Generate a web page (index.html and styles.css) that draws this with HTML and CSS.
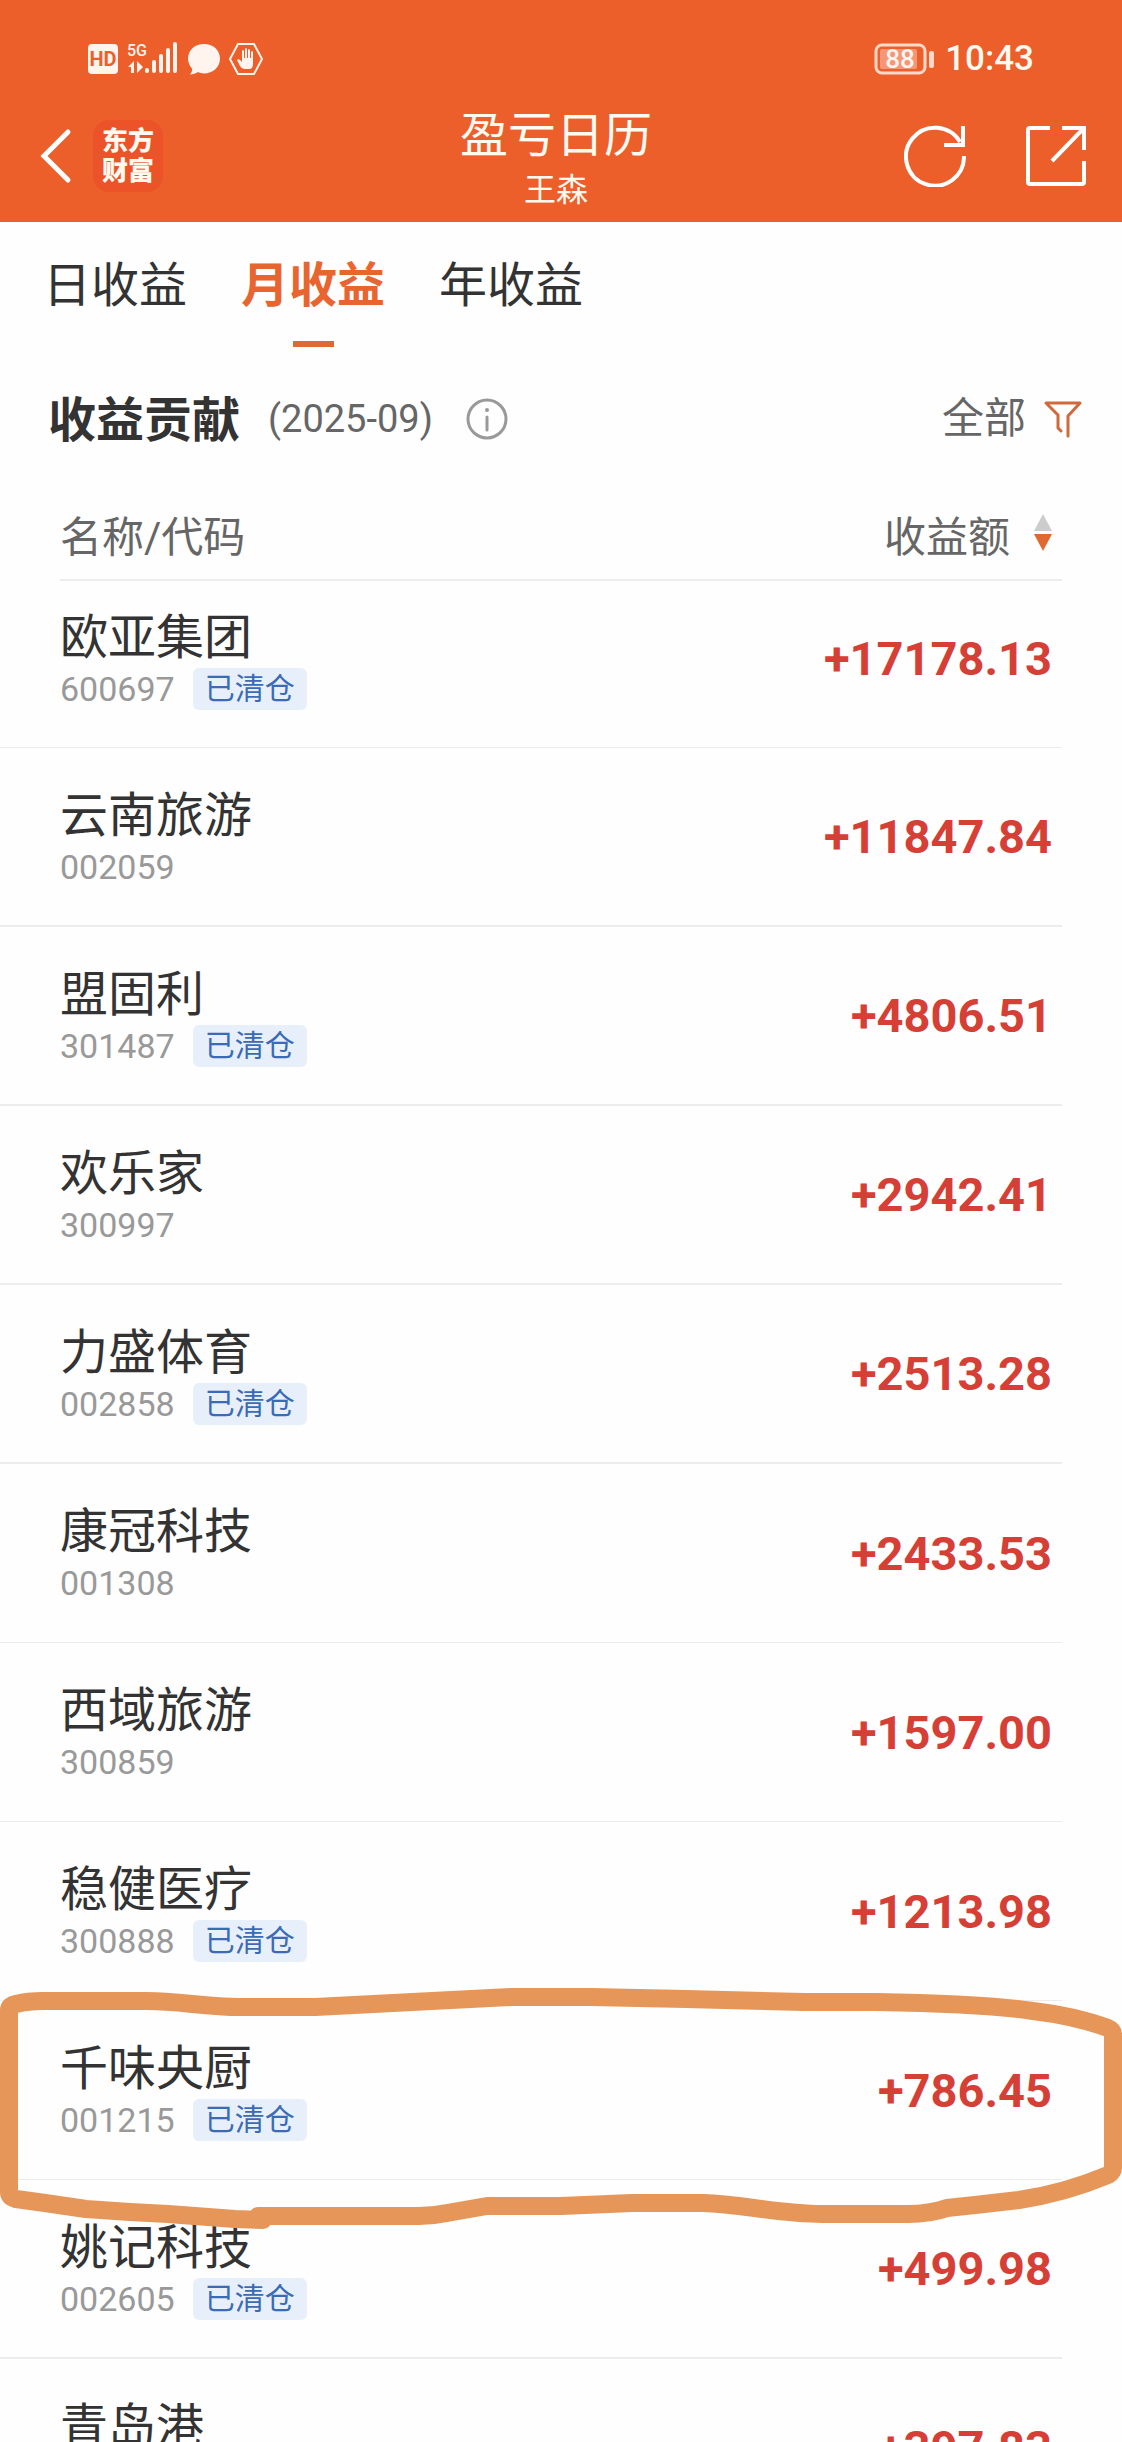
FILE: index.html
```html
<!DOCTYPE html>
<html lang="zh-CN">

<head>
  <meta charset="UTF-8">
  <meta name="viewport" content="width=device-width, initial-scale=1.0">
  <title>盈亏日历</title>
  <link rel="stylesheet" href="styles.css">
</head>

<body>
  <div class="app">
    <header class="top">
      <div class="status">
        <svg class="status-icons" width="176" height="34" viewBox="88 42 176 34" aria-hidden="true">
          <rect x="88" y="44" width="30" height="30" rx="4" fill="#fff4ee" />
          <text class="hd" x="103" y="66" text-anchor="middle">HD</text>
          <text class="net" x="127" y="56">5G</text>
          <path d="M128 67l6-6v12h-3v-6zM137 61v12l6-6z" fill="#fff4ee" />
          <path d="M147 70v1M154 62v9M161 56v15M168 50v21M175 44v27" stroke="#fff4ee" stroke-width="4" stroke-linecap="round" />
          <path d="M204 44c9 0 16 6 16 14.500s-7 15-16 15c-2 0-5-1-6-1.500-2 1.500-5 2.500-8 2.500 1.500-2 2.500-4 2-6-2-2-4-6-4-10C188 50 195 44 204 44z" fill="#fff4ee" />
          <path d="M238 44h16l8 15-8 15h-16l-8-15z" fill="none" stroke="#fff4ee" stroke-width="2" />
          <path d="M237 60q2-2 4 1l1 1V51q1-2 2 0v7h1v-9q1-2 2 0v9h1v-8q1-2 2 0v8h1v-6q1-2 2 0v12q0 5-4 5h-5q-2 0-4-3z" fill="#fff4ee" />
        </svg>
        <div class="status-right">
          <svg width="60" height="32" viewBox="874 42 60 32" aria-hidden="true">
            <rect x="876" y="44" width="49" height="28" rx="6" fill="none" stroke="#fdd9c9" stroke-width="3" />
            <rect x="880" y="48" width="37" height="20" rx="2" fill="#f59776" />
            <rect x="929" y="50" width="5" height="17" rx="2" fill="#fdd9c9" />
            <text class="battery" x="900" y="67" text-anchor="middle">88</text>
          </svg>
          <time class="clock">10:43</time>
        </div>
      </div>
      <div class="nav">
        <div class="nav-left">
          <button class="icon-btn" type="button" aria-label="返回">
            <svg width="32" height="56" viewBox="0 0 32 56"><path d="M28 4L4 28l24 24" fill="none" stroke="#fff" stroke-width="5" stroke-linecap="round" /></svg>
          </button>
          <div class="logo">东方<br>财富</div>
        </div>
        <div class="title">
          <h1>盈亏日历</h1>
          <p>王森</p>
        </div>
        <div class="nav-right">
          <button class="icon-btn" type="button" aria-label="刷新">
            <svg width="62" height="62" viewBox="0 0 62 62" fill="none" stroke="#fff" stroke-width="4"><path d="M60 31A29 29 0 1 1 56 17" /><path d="M59 1v19H40" /></svg>
          </button>
          <button class="icon-btn" type="button" aria-label="分享">
            <svg width="60" height="60" viewBox="0 0 60 60" fill="none" stroke="#fff" stroke-width="4"><path d="M24 2H4q-2 0-2 2v52q0 2 2 2h52q2 0 2-2V35M36 2h22v22" /><path d="M57 3L26 35" /></svg>
          </button>
        </div>
      </div>
    </header>

    <nav class="tabs">
      <a class="tab" href="#day">日收益</a>
      <a class="tab active" href="#month">月收益</a>
      <a class="tab" href="#year">年收益</a>
    </nav>

    <div class="section-head">
      <h2>收益贡献</h2>
      <span class="period">(2025-09)</span>
      <button class="icon-btn" type="button" aria-label="说明">
        <svg width="42" height="42" viewBox="0 0 42 42"><circle cx="21" cy="21" r="19" fill="none" stroke="#999" stroke-width="3" /><circle cx="21" cy="12" r="2" fill="#999" /><path d="M21 19v13" stroke="#999" stroke-width="3" stroke-linecap="round" /></svg>
      </button>
      <button class="filter" type="button">
        全部
        <svg width="38" height="38" viewBox="0 0 38 38"><path d="M24 36V16L36 3H2l12 12v13l3 3" fill="none" stroke="#d0693b" stroke-width="3" stroke-linecap="round" stroke-linejoin="round" /></svg>
      </button>
    </div>

    <div class="list">
      <table>
        <thead>
          <tr>
            <th class="left">名称/代码</th>
            <th class="right">
              <button class="sort" type="button">
                收益额
                <svg width="18" height="38" viewBox="0 0 18 38"><path d="M9 0l9 17H0z" fill="#ccc" /><path d="M0 20h18L9 37z" fill="#e0692f" /></svg>
              </button>
            </th>
          </tr>
        </thead>
        <tbody>
          <tr class="first thin">
            <td><div class="name">欧亚集团</div><div class="code">600697<span class="badge">已清仓</span></div></td>
            <td class="amount">+17178.13</td>
          </tr>
          <tr>
            <td><div class="name">云南旅游</div><div class="code">002059</div></td>
            <td class="amount">+11847.84</td>
          </tr>
          <tr>
            <td><div class="name">盟固利</div><div class="code">301487<span class="badge">已清仓</span></div></td>
            <td class="amount">+4806.51</td>
          </tr>
          <tr>
            <td><div class="name">欢乐家</div><div class="code">300997</div></td>
            <td class="amount">+2942.41</td>
          </tr>
          <tr>
            <td><div class="name">力盛体育</div><div class="code">002858<span class="badge">已清仓</span></div></td>
            <td class="amount">+2513.28</td>
          </tr>
          <tr class="thin">
            <td><div class="name">康冠科技</div><div class="code">001308</div></td>
            <td class="amount">+2433.53</td>
          </tr>
          <tr class="thin">
            <td><div class="name">西域旅游</div><div class="code">300859</div></td>
            <td class="amount">+1597.00</td>
          </tr>
          <tr class="thin">
            <td><div class="name">稳健医疗</div><div class="code">300888<span class="badge">已清仓</span></div></td>
            <td class="amount">+1213.98</td>
          </tr>
          <tr class="thin marked">
            <td><div class="name">千味央厨</div><div class="code">001215<span class="badge">已清仓</span></div></td>
            <td class="amount">+786.45
              <!-- hand-drawn ring round the row -->
              <svg class="ring" viewBox="0 0 1122 260" preserveAspectRatio="none" aria-hidden="true">
                <path d="M263 242L235 241L168 236L130 234L86 231L45 225L16 221Q9 219 9 214V32Q9 27 16 26Q28 23 43 23H147C180 23 205 29 240 29H315L512 19H591L686 21L804 24H876C940 25 1000 28 1033 33Q1075 38 1108 50Q1113 52 1113 56V190Q1113 194 1108 197Q1065 215 1019 222L975 227L947 230Q930 236 908 236H822C780 236 740 226 704 225H632L561 228H487L447 235Q433 238 419 238H258" />
              </svg>
            </td>
          </tr>
          <tr>
            <td><div class="name">姚记科技</div><div class="code">002605<span class="badge">已清仓</span></div></td>
            <td class="amount">+499.98</td>
          </tr>
          <tr>
            <td><div class="name">青岛港</div><div class="code"></div></td>
            <td class="amount">+397.83</td>
          </tr>
        </tbody>
      </table>
    </div>
  </div>
</body>

</html>
```

FILE: styles.css
```css
* {
  box-sizing: border-box;
}

body {
  margin: 0;
  background: #fefefe;
  color: #333;
  font-family: Roboto, "Noto Sans CJK SC", sans-serif;
}

h1, h2, p {
  margin: 0;
  font-weight: 400;
}

button {
  padding: 0;
  border: 0;
  background: none;
  font: inherit;
  color: inherit;
}

svg {
  display: block;
}

.app {
  height: 100vh;
  display: flex;
  flex-direction: column;
  overflow: hidden;
}

/* header */
.top {
  flex: none;
  height: 222px;
  background: #ec5f2b;
  color: #fffaf0;
}

.status {
  display: flex;
  justify-content: space-between;
  align-items: center;
  height: 76px;
  padding: 42px 88px 0 88px;
}

.status-right {
  display: flex;
  align-items: center;
  gap: 11px;
}

.hd {
  font: 700 20px Roboto, sans-serif;
  fill: #ec5f2b;
}

.net {
  font: 500 16px Roboto, sans-serif;
  fill: #fff4ee;
}

.battery {
  font: 500 26px Roboto, sans-serif;
  fill: #fff4ee;
}

.clock {
  font-size: 35px;
  font-weight: 500;
  line-height: 36px;
}

.nav {
  display: grid;
  grid-template-columns: 1fr auto 1fr;
  align-items: center;
  height: 146px;
  padding: 14px 36px 0 26px;
}

.nav-left {
  display: flex;
  align-items: center;
  gap: 21px;
  padding-left: 14px;
}

.nav-right {
  display: flex;
  align-items: center;
  justify-content: flex-end;
  gap: 60px;
}

.logo {
  width: 70px;
  height: 72px;
  padding: 6px 0;
  border-radius: 16px;
  background: #ec5328;
  font-size: 26px;
  font-weight: 900;
  line-height: 30px;
  text-align: center;
}

.title {
  padding-top: 8px;
  text-align: center;
}

.title h1 {
  font-size: 48px;
  line-height: 60px;
}

.title p {
  font-size: 32px;
  line-height: 48px;
}

/* tabs */
.tabs {
  flex: none;
  display: flex;
  gap: 54px;
  height: 126px;
  padding: 0 43px;
}

.tab {
  display: flex;
  flex-direction: column;
  align-items: center;
  padding-top: 34px;
  font-size: 48px;
  line-height: 60px;
  color: #333;
  text-decoration: none;
}

.active {
  color: #e8652f;
  font-weight: 700;
}

.active::after {
  content: "";
  width: 41px;
  height: 6px;
  margin-top: 25px;
  background: #dd6935;
}

/* section title */
.section-head {
  flex: none;
  display: flex;
  align-items: center;
  height: 142px;
  padding: 0 40px 0 48px;
}

.section-head h2 {
  padding-bottom: 6px;
  font-size: 48px;
  font-weight: 700;
}

.period {
  margin: 0 33px 0 28px;
  font-size: 38px;
  color: #666;
}

.filter {
  display: flex;
  align-items: center;
  gap: 18px;
  margin-left: auto;
  font-size: 42px;
  line-height: 60px;
  color: #666;
}

/* list */
.list {
  flex: 1;
  min-height: 0;
  padding-right: 60px;
  overflow: hidden;
}

table {
  width: 100%;
  border-spacing: 0;
}

th {
  height: 91px;
  padding: 0 0 5px;
  background: linear-gradient(#ececec, #ececec) 0 100% / 100% 2px no-repeat;
  font-size: 42px;
  font-weight: 400;
  color: #666;
}

/* the line under the head starts where the text does */
th.left {
  padding-left: 60px;
  background-position: 60px 100%;
  text-align: left;
}

.sort {
  display: flex;
  align-items: center;
  gap: 24px;
  margin-left: auto;
  padding-right: 10px;
}

td {
  height: 179px;
  padding: 0;
  border-bottom: 2px solid #ececec;
}

td:first-child {
  padding-left: 60px;
}

.thin td {
  border-bottom-width: 1px;
}

.first td {
  height: 167px;
  padding-bottom: 11px;
}

.name {
  font-size: 48px;
  line-height: 60px;
}

.code {
  display: flex;
  align-items: center;
  gap: 18px;
  height: 42px;
  font-size: 34px;
  color: #999;
}

.badge {
  padding: 0 12px;
  border-radius: 6px;
  background: #e7f0fa;
  font-size: 30px;
  line-height: 42px;
  color: #3b6bb5;
}

td.amount {
  padding-right: 10px;
  font-size: 47px;
  font-weight: 700;
  text-align: right;
  color: #d63f35;
}

.marked {
  position: relative;
}

.ring {
  position: absolute;
  top: -23px;
  left: 0;
  width: 100vw;
  height: 260px;
  z-index: 1;
  pointer-events: none;
}

.ring path {
  fill: none;
  stroke: #e59658;
  stroke-width: 18px;
  stroke-linecap: round;
  stroke-linejoin: round;
}
```
